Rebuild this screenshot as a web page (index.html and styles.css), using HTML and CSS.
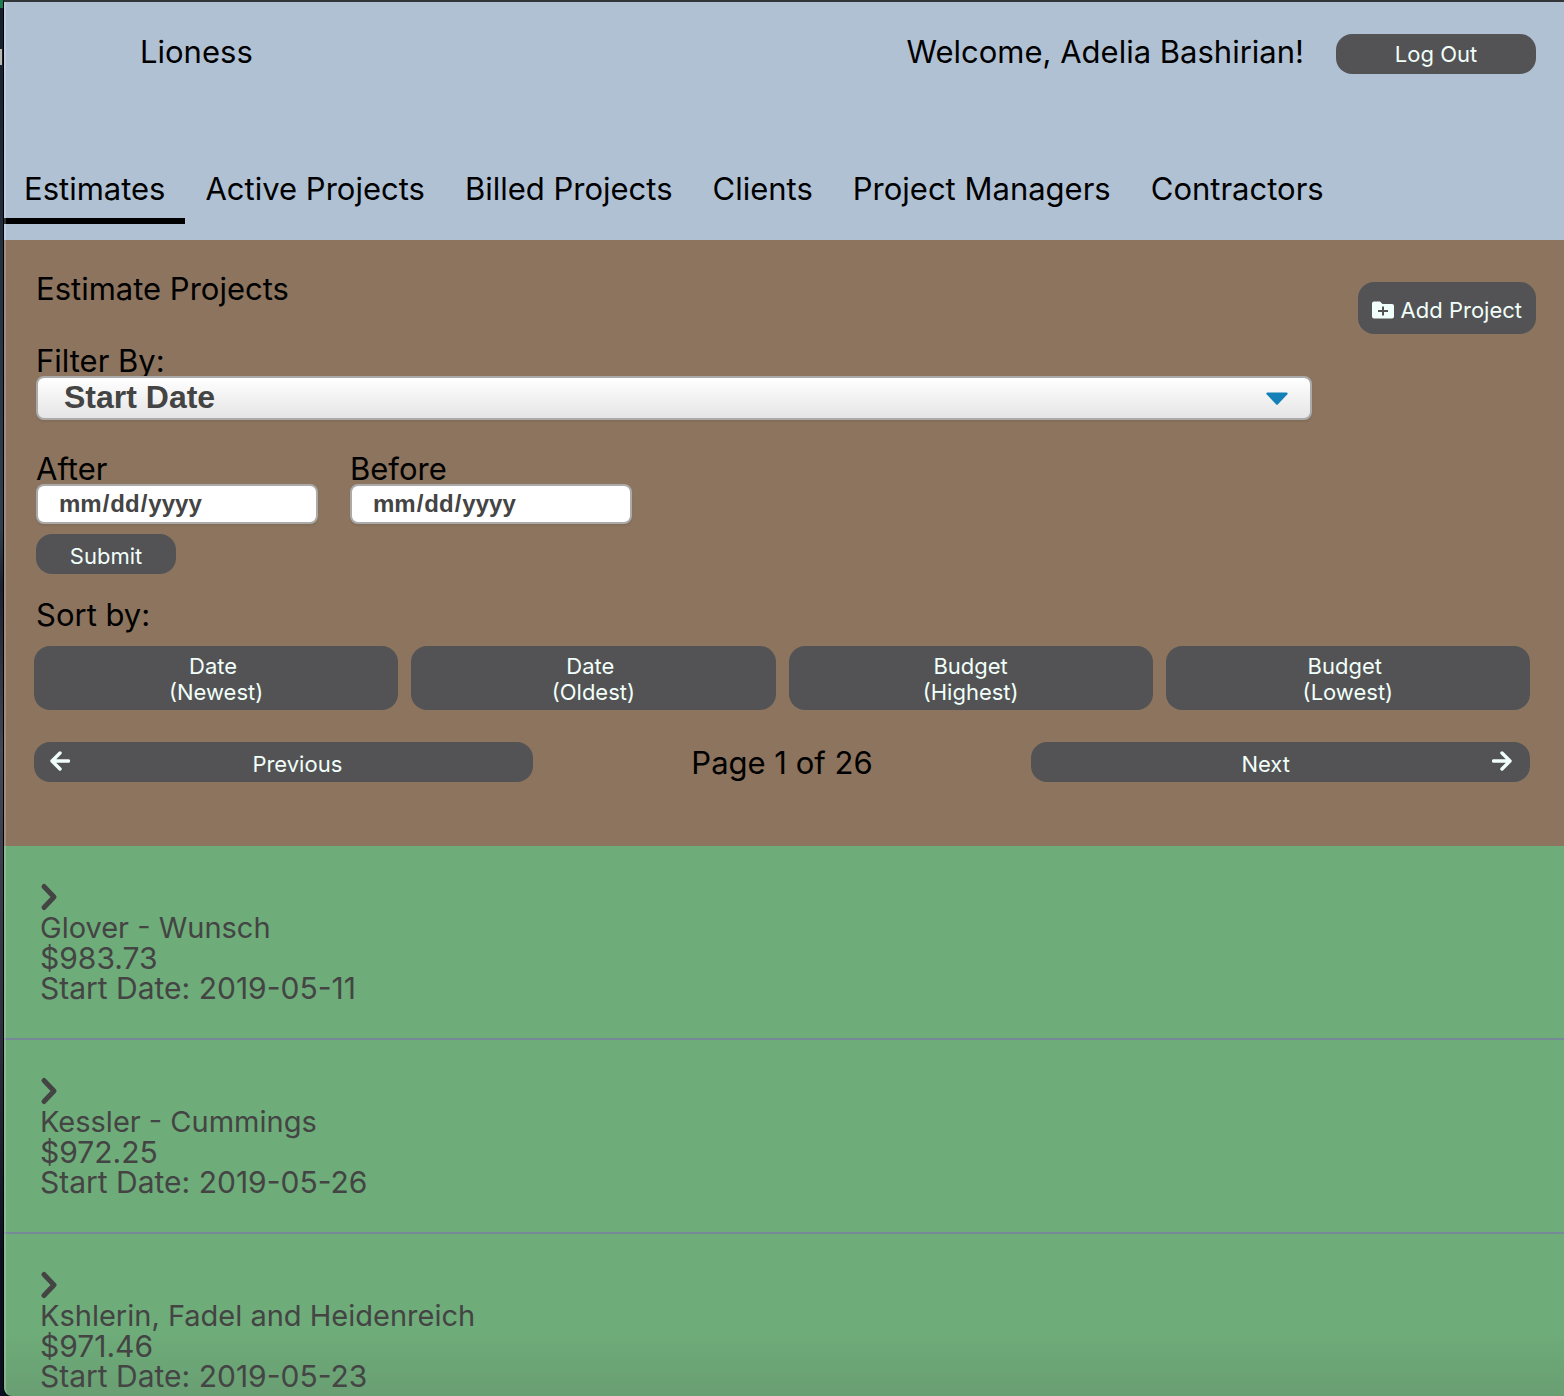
FILE: index.html
```
<!DOCTYPE html>
<html lang="en">
<head>
<meta charset="utf-8">
<meta name="viewport" content="width=device-width, initial-scale=1">
<title>Lioness - Estimates</title>
<link rel="stylesheet" href="styles.css">
</head>
<body>
<div class="window">
  <div class="scroller">
    <header class="header">
      <div class="topbar">
        <span class="brand">Lioness</span>
        <span class="welcome">Welcome, Adelia Bashirian!</span>
        <button class="button logout" type="button">Log Out</button>
      </div>
      <nav class="tabs">
        <a class="tab tab-active" href="#estimates">Estimates</a>
        <a class="tab" href="#active">Active Projects</a>
        <a class="tab" href="#billed">Billed Projects</a>
        <a class="tab" href="#clients">Clients</a>
        <a class="tab" href="#managers">Project Managers</a>
        <a class="tab" href="#contractors">Contractors</a>
      </nav>
    </header>

    <section class="panel">
      <div class="panel-head">
        <form class="filters">
          <h1 class="title">Estimate Projects</h1>
          <label class="label" for="filter">Filter By:</label>
          <div class="select-wrap">
            <select class="select" id="filter">
              <option>Start Date</option>
              <option>Budget</option>
              <option>Client</option>
            </select>
            <svg class="caret" viewBox="0 0 22 13" aria-hidden="true"><path d="M1.2 0.5H20.8Q22.2 1 21.4 2.2L12 12.2Q11 13.2 10 12.2L0.6 2.2Q-0.2 1 1.2 0.5Z"/></svg>
          </div>
          <div class="dates">
            <div class="date-field">
              <label class="label" for="after">After</label>
              <input class="date" id="after" type="date">
            </div>
            <div class="date-field">
              <label class="label" for="before">Before</label>
              <input class="date" id="before" type="date">
            </div>
          </div>
          <button class="button submit" type="button">Submit</button>
        </form>
        <button class="button add" type="button">
          <svg class="folder" viewBox="0 0 22 18" aria-hidden="true"><path fill-rule="evenodd" d="M2 0.5H8L10.500 3H20Q22 3 22 5V15.500Q22 17.500 20 17.500H2Q0 17.500 0 15.500V2.500Q0 0.500 2 0.500ZM10 5.500V9H6V11H10V14.500H12V11H16V9H12V5.500Z"/></svg>
          Add Project
        </button>
      </div>

      <h2 class="title sort-title">Sort by:</h2>
      <div class="sorts">
        <button class="button sort" type="button">Date&nbsp;<br>(Newest)</button>
        <button class="button sort" type="button">Date&nbsp;<br>(Oldest)</button>
        <button class="button sort" type="button">Budget<br>(Highest)</button>
        <button class="button sort" type="button">Budget&nbsp;<br>(Lowest)</button>
      </div>
      <div class="pager">
        <button class="button previous" type="button">
          <svg class="arrow" viewBox="0 0 20 20" aria-hidden="true"><path d="M18.500 10H2.500M10 2L2 10L10 18"/></svg>
          <span class="pager-text">Previous</span>
        </button>
        <span class="page">Page 1 of 26</span>
        <button class="button next" type="button">
          <span class="pager-text">Next</span>
          <svg class="arrow" viewBox="0 0 20 20" aria-hidden="true"><path d="M1.500 10H17.500M10 2L18 10L10 18"/></svg>
        </button>
      </div>
    </section>

    <ul class="projects">
      <li class="project">
        <svg class="chevron" viewBox="0 0 18 30" aria-hidden="true"><path d="M4 4.500L14 15L4 25.500"/></svg>
        <p class="line name">Glover - Wunsch</p>
        <p class="line">$983.73</p>
        <p class="line">Start Date: 2019-05-11</p>
      </li>
      <li class="project">
        <svg class="chevron" viewBox="0 0 18 30" aria-hidden="true"><path d="M4 4.500L14 15L4 25.500"/></svg>
        <p class="line name">Kessler - Cummings</p>
        <p class="line">$972.25</p>
        <p class="line">Start Date: 2019-05-26</p>
      </li>
      <li class="project">
        <svg class="chevron" viewBox="0 0 18 30" aria-hidden="true"><path d="M4 4.500L14 15L4 25.500"/></svg>
        <p class="line name">Kshlerin, Fadel and Heidenreich</p>
        <p class="line">$971.46</p>
        <p class="line">Start Date: 2019-05-23</p>
      </li>
    </ul>
  </div>
</div>
</body>
</html>
```
FILE: styles.css
```
* {
  box-sizing: border-box;
}

body {
  margin: 0;
  padding: 2px 0 0 4px;
  height: 100vh;
  overflow: hidden;
  background:
    linear-gradient(#1c7a4c, #1c7a4c) 0 0 / 3px 8px no-repeat,
    linear-gradient(#b9b9b4, #b9b9b4) 0 49px / 2px 16px no-repeat,
    linear-gradient(#141e2c, #233242 20%, #2f3e4e 38%, #1c2030 42%, #444855 54%, #2b2f3d 75%, #0a1020 90%);
  color: #000;
  font: 31px/32px Inter, "Liberation Sans", sans-serif;
}

/* app window, with a lit left edge and a shaded bottom */
.window {
  position: relative;
  height: 100%;
  overflow: hidden;
  border-radius: 0 0 0 8px;
  box-shadow: -1px 0 #000, 0 -2px #333638;
}

.window::after {
  content: "";
  position: absolute;
  inset: 0;
  border-left: 2px solid rgba(255, 255, 255, 0.2);
  border-radius: 0 0 0 8px;
  background: linear-gradient(to top, rgba(80, 80, 80, 0.14), rgba(80, 80, 80, 0) 60px);
  pointer-events: none;
}

.scroller {
  height: 100%;
  overflow-y: auto;
  scrollbar-width: none;
}

.header {
  padding: 32px 0 16px;
  background: #b1c1d4;
}

.topbar {
  display: flex;
  align-items: flex-start;
  padding: 0 28px 0 136px;
}

.brand,
.welcome {
  line-height: 36px;
}

.welcome {
  margin-left: auto;
  margin-right: 32px;
}

.button {
  height: 40px;
  padding: 4px 12px 0;
  border: 0;
  border-radius: 16px;
  background: #535355;
  color: #f1fffa;
  font: 22px/26px Inter, "Liberation Sans", sans-serif;
  cursor: pointer;
}

.logout {
  width: 200px;
  padding-top: 0;
}

.tabs {
  display: flex;
  margin-top: 82px;
}

.tab {
  padding: 17px 20px 13px;
  border-bottom: 6px solid transparent;
  color: #000;
  text-decoration: none;
}

.tab-active {
  border-bottom-color: #000;
}

.panel {
  padding: 32px 28px 64px 32px;
  background: #8c745e;
}

.panel-head {
  display: flex;
  align-items: flex-start;
  gap: 46px;
}

.filters {
  flex: 1;
}

.title,
.label {
  padding-top: 2px;
  line-height: 30px;
}

.title {
  margin: 0 0 40px;
  font-size: 31px;
  font-weight: 400;
}

.label {
  display: block;
}

.select-wrap {
  position: relative;
}

.select,
.date {
  display: block;
  width: 100%;
  border: 2px solid #aaa;
  border-radius: 8px;
  box-shadow: 0 2px 2px rgba(0, 0, 0, 0.06);
  color: #444;
  font-family: "Liberation Sans", Arial, sans-serif;
  font-weight: 700;
}

.select {
  height: 44px;
  padding: 0 48px 2px 26px;
  appearance: none;
  background: linear-gradient(#fff, #e5e5e5);
  font-size: 32px;
}

.caret {
  position: absolute;
  top: 16px;
  right: 24px;
  width: 22px;
  height: 13px;
  fill: #1380b8;
  pointer-events: none;
}

.dates {
  display: flex;
  gap: 32px;
  margin-top: 32px;
}

.date-field {
  width: 282px;
}

.date {
  height: 40px;
  padding: 0 20px;
  background: #fff;
  font-size: 24px;
}

.date::-webkit-calendar-picker-indicator {
  display: none;
}

.submit {
  display: block;
  width: 140px;
  margin-top: 10px;
}

.add {
  display: flex;
  align-items: center;
  gap: 7px;
  height: 52px;
  margin-top: 10px;
  padding: 4px 14px 0;
  white-space: nowrap;
}

.folder {
  width: 22px;
  height: 18px;
  fill: currentColor;
}

.sort-title {
  margin: 24px 0 16px;
}

.sorts,
.pager {
  display: grid;
  margin: 0 6px 0 -2px;
}

.sorts {
  grid-template-columns: repeat(4, 1fr);
  gap: 13px;
}

.sort {
  height: 64px;
  padding-top: 2px;
}

.pager {
  grid-template-columns: repeat(3, 1fr);
  margin-top: 32px;
}

.page {
  padding-top: 2px;
  line-height: 38px;
  text-align: center;
}

.previous,
.next {
  display: flex;
  align-items: center;
}

.previous {
  padding-right: 8px;
  padding-left: 16px;
}

.next {
  padding-right: 18px;
  padding-left: 8px;
}

.pager-text {
  flex: 1;
}

.arrow {
  width: 20px;
  height: 20px;
  margin-bottom: 6px;
  fill: none;
  stroke: currentColor;
  stroke-width: 3.4;
  stroke-linecap: round;
  stroke-linejoin: round;
}

.projects {
  margin: 0;
  padding: 0;
  list-style: none;
  background: #6eac79;
  color: #444;
}

.project {
  padding: 36px 36px 35px;
  border-bottom: 2px solid #778899;
}

.chevron {
  display: block;
  width: 18px;
  height: 30px;
  margin-bottom: 1px;
  fill: none;
  stroke: currentColor;
  stroke-width: 5;
  stroke-linecap: round;
  stroke-linejoin: round;
}

.line {
  margin: 0;
  font-size: 30px;
  line-height: 30px;
}

.name {
  font-size: 29px;
}
```
